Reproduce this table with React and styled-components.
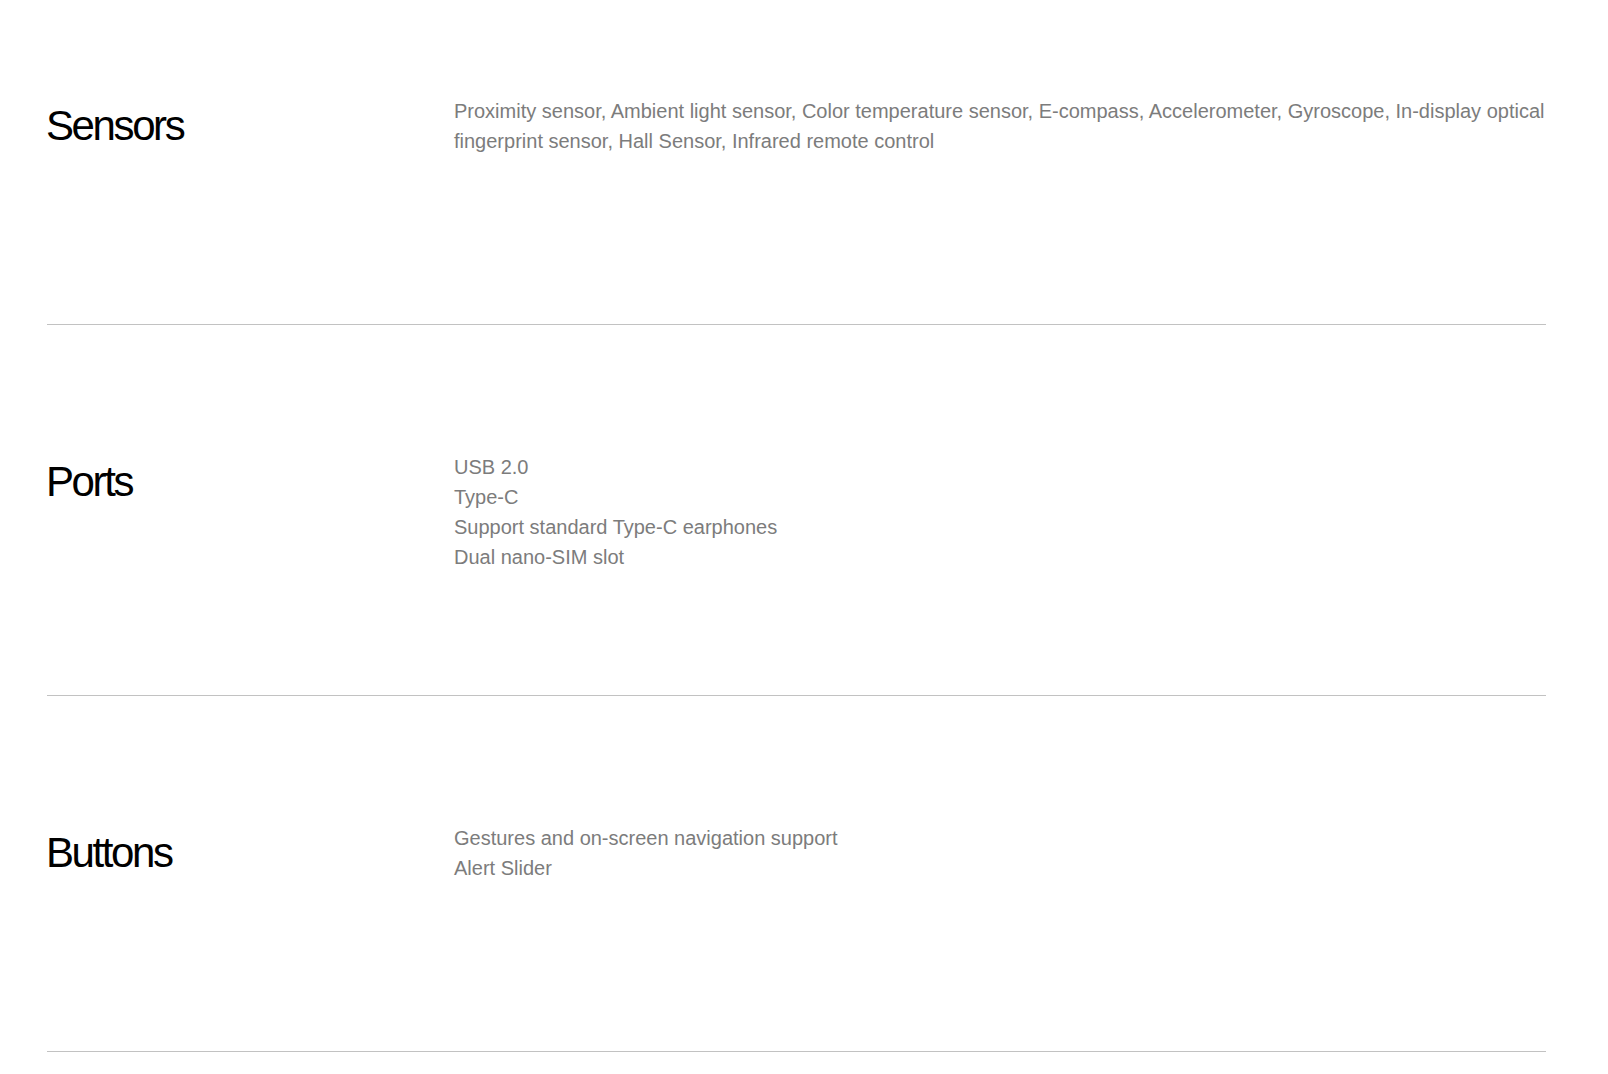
import React from 'react'
import styled, { createGlobalStyle } from 'styled-components'

const GlobalStyle = createGlobalStyle`
  html, body {
    margin: 0;
    padding: 0;
    background: #ffffff;
  }
  body {
    font-family: "Liberation Sans", Arial, sans-serif;
  }
`

const specs = [
    {
        title: "Sensors",
        lines: ["Proximity sensor, Ambient light sensor, Color temperature sensor, E-compass, Accelerometer, Gyroscope, In-display optical fingerprint sensor, Hall Sensor, Infrared remote control"],
    },
    {
        title: "Ports",
        lines: ["USB 2.0", "Type-C", "Support standard Type-C earphones", "Dual nano-SIM slot"],
    },
    {
        title: "Buttons",
        lines: ["Gestures and on-screen navigation support", "Alert Slider"],
    },
]

const App = () => {
    return (
        <Page>
            <GlobalStyle />
            {specs.map((spec, i) => (
                <SpecRow key={spec.title} $top={i === 0 ? 96 : 127}>
                    <SpecTitle>{spec.title}</SpecTitle>
                    <SpecBody>
                        {spec.lines.map((line) => (
                            <SpecLine key={line}>{line}</SpecLine>
                        ))}
                    </SpecBody>
                </SpecRow>
            ))}
        </Page>
    )
}

const Page = styled.div`
padding: 0 62px 0 47px;
`

const SpecRow = styled.section`
display: grid;
grid-template-columns: 407px 1fr;
align-items: start;
min-height: 105px;
padding: ${(p) => p.$top}px 0 123px;
border-bottom: 1px solid #c2c2c2;
`

const SpecTitle = styled.h2`
margin: 2px 0 0 -1px;
color: #000000;
font-size: 42px;
line-height: 55px;
font-weight: 400;
letter-spacing: -2.4px;
`

const SpecBody = styled.div`
display: flex;
flex-direction: column;
min-height: 105px;
`

const SpecLine = styled.p`
margin: 0;
color: #7c7c7c;
font-size: 20px;
line-height: 30px;
letter-spacing: 0;
`

export default App
